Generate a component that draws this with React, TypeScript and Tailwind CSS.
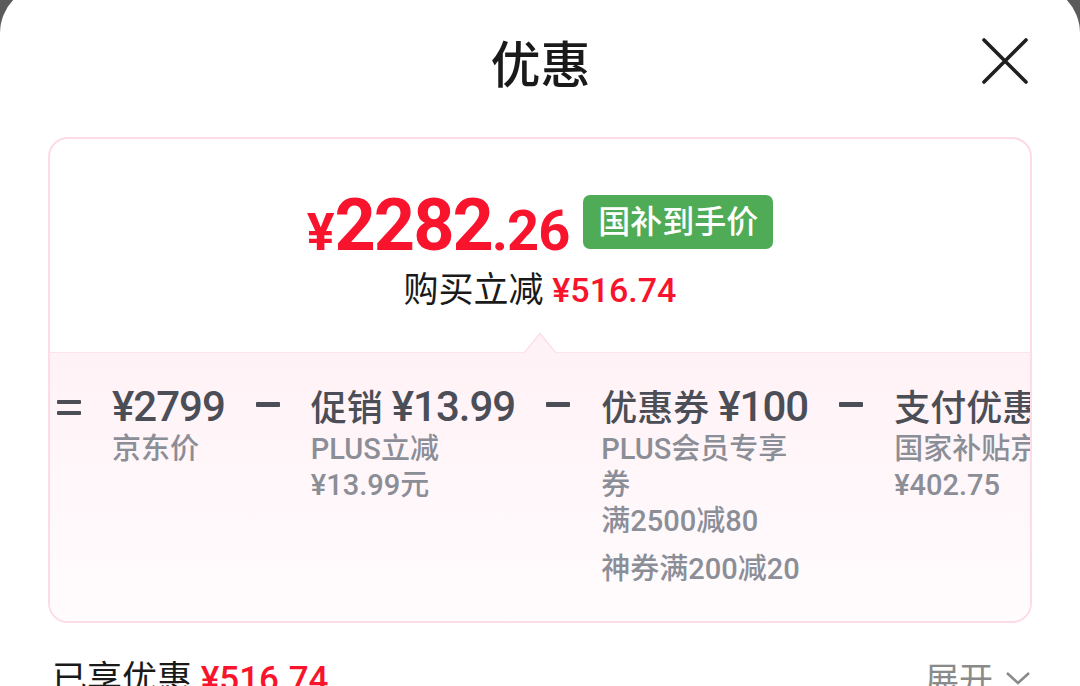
import React from "react";

function Eq() {
  return (
    <div className="w-[24px] shrink-0 flex flex-col pt-[17px] gap-[7px]">
      <div className="h-[4px] bg-[#4b4e56] rounded-[1px]" />
      <div className="h-[4px] bg-[#4b4e56] rounded-[1px]" />
    </div>
  );
}

function Minus() {
  return (
    <div className="w-[24px] shrink-0 pt-[19px]">
      <div className="h-[5px] bg-[#4b4e56] rounded-[1px]" />
    </div>
  );
}

function Item({ label, amount, subs, extra }: { label?: string; amount: string; subs: string[]; extra?: string }) {
  return (
    <div className="shrink-0 flex flex-col">
      <div className="h-[48px] leading-[48px] text-[#4b4e56] font-medium whitespace-nowrap">
        {label && <span className="text-[36px]">{label} </span>}
        <span className="text-[42px] tracking-[-1px]">{amount}</span>
      </div>
      {subs.map((s, i) => (
        <div key={i} className="text-[29px] leading-[36px] text-[#8b8e97] font-medium whitespace-nowrap">
          {s}
        </div>
      ))}
      {extra && (
        <div className="mt-[12px] text-[29px] leading-[36px] text-[#8b8e97] font-medium whitespace-nowrap">{extra}</div>
      )}
    </div>
  );
}

export default function App() {
  return (
    <div className="w-[1080px] h-[686px] bg-[#5b5b5b] overflow-hidden font-['Roboto','Noto_Sans_CJK_SC',sans-serif]">
      <div className="-mt-[15px] h-[701px] bg-white rounded-t-[48px] overflow-hidden">
        {/* header */}
        <div className="grid grid-cols-[1fr_auto_1fr] items-center pt-[51px] pl-[53px] pr-[52px]">
          <div />
          <div className="text-[50px] leading-[50px] text-[#1a1a1a] font-['Noto_Sans_CJK_SC',sans-serif] font-medium">
            优惠
          </div>
          <div className="justify-self-end">
            <svg width="46" height="46" viewBox="0 0 46 46">
              <path d="M2 2 L44 44 M44 2 L2 44" stroke="#1f1f1f" strokeWidth="3.6" strokeLinecap="round" />
            </svg>
          </div>
        </div>

        {/* card */}
        <div className="mt-[51px] mx-[48px] border-2 border-[#fddbe7] rounded-[20px]">
          <div className="h-[213px] flex flex-col items-center pt-[51px]">
            <div className="flex items-end">
              <div className="text-[72px] leading-none text-[#f8142d] font-bold whitespace-nowrap">
                <span className="text-[52px]">¥</span>
                <span className="tracking-[-2px]">2282</span>
                <span className="text-[56px] tracking-[-1px]">.26</span>
              </div>
              <div className="ml-[14px] mb-[13px] h-[54px] px-[15px] rounded-[7px] bg-[#50ab56] text-white text-[32px] flex items-center font-medium">
                国补到手价
              </div>
            </div>
            <div className="mt-[8px] text-[35px] leading-[40px] text-[#1a1a1a] whitespace-nowrap">
              购买立减 <span className="text-[#f8142d] text-[34px] font-medium">¥516.74</span>
            </div>
          </div>

          <div className="relative border-t border-[#ffe3ec] bg-linear-to-b from-[#fff2f6] to-[#fffcfd] rounded-b-[18px] pt-[30px] pb-[34px] pl-[7px]">
            <svg className="absolute left-[474px] top-[-21px]" width="32" height="22" viewBox="0 0 32 22">
              <polygon points="0,22 16,1 32,22" fill="#fff2f6" />
              <polyline points="0,21 16,1.5 32,21" fill="none" stroke="#ffdfe9" strokeWidth="1.5" />
            </svg>
            <div className="flex items-start gap-[31px] overflow-hidden">
              <Eq />
              <Item amount="¥2799" subs={["京东价"]} />
              <Minus />
              <Item label="促销" amount="¥13.99" subs={["PLUS立减", "¥13.99元"]} />
              <Minus />
              <Item label="优惠券" amount="¥100" subs={["PLUS会员专享", "券", "满2500减80"]} extra="神券满200减20" />
              <Minus />
              <Item label="支付优惠" amount="¥402.75" subs={["国家补贴京东支付", "¥402.75"]} />
            </div>
          </div>
        </div>

        {/* bottom row */}
        <div className="mt-[37px] pl-[52px] pr-[49px] flex items-start justify-between">
          <div className="text-[35px] leading-[40px] text-[#1a1a1a] whitespace-nowrap">
            已享优惠 <span className="text-[#f8142d] font-medium">¥516.74</span>
          </div>
          <div className="flex items-start gap-[12px] text-[34px] leading-[40px] text-[#8a8a8a]">
            <span>展开</span>
            <svg className="mt-[10px]" width="26" height="16" viewBox="0 0 26 16">
              <polyline points="2,3 13,13 24,3" fill="none" stroke="#8a8a8a" strokeWidth="2.5" />
            </svg>
          </div>
        </div>
      </div>
    </div>
  );
}
